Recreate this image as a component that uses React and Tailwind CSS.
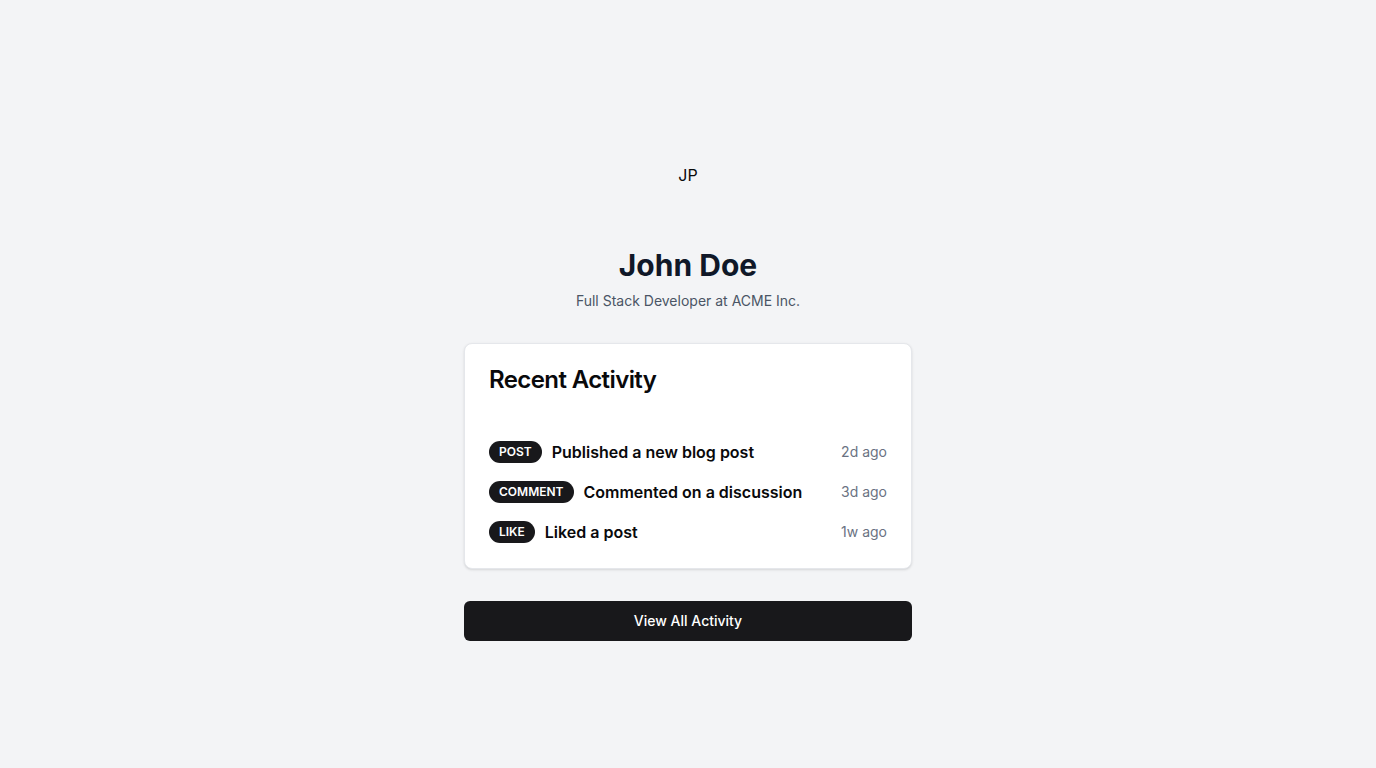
const activities = [
  { id: 1, type: "POST", text: "Published a new blog post", time: "2d ago" },
  { id: 2, type: "COMMENT", text: "Commented on a discussion", time: "3d ago" },
  { id: 3, type: "LIKE", text: "Liked a post", time: "1w ago" },
];

export default function App() {
  return (
    <div className="min-h-screen bg-gray-100 flex items-center justify-center font-['Inter',sans-serif]">
      <div className="w-full max-w-md">
        <div className="flex flex-col items-center text-center">
          <div className="h-24 w-24 rounded-full flex items-center justify-center text-base text-[#09090b]">
            JP
          </div>
          <h1 className="mt-6 text-3xl font-bold text-gray-900">John Doe</h1>
          <p className="mt-2 text-sm text-gray-600">Full Stack Developer at ACME Inc.</p>
        </div>

        <div className="mt-8 rounded-lg border border-gray-200 bg-white shadow-sm">
          <div className="p-6">
            <h2 className="text-2xl font-semibold leading-none tracking-tight text-[#09090b]">Recent Activity</h2>
          </div>
          <div className="px-6 pb-6 pt-6 space-y-4">
            {activities.map((a) => (
              <div key={a.id} className="flex h-6 items-center justify-between">
                <div className="flex items-center gap-2.5">
                  <span className="inline-flex items-center rounded-full bg-[#18181b] px-2.5 py-[3px] text-xs font-semibold text-white">
                    {a.type}
                  </span>
                  <span className="text-base font-semibold text-[#09090b]">{a.text}</span>
                </div>
                <span className="text-sm text-gray-500">{a.time}</span>
              </div>
            ))}
          </div>
        </div>

        <button className="mt-8 h-10 w-full rounded-md bg-[#18181b] text-sm font-medium text-white">
          View All Activity
        </button>
      </div>
    </div>
  );
}
